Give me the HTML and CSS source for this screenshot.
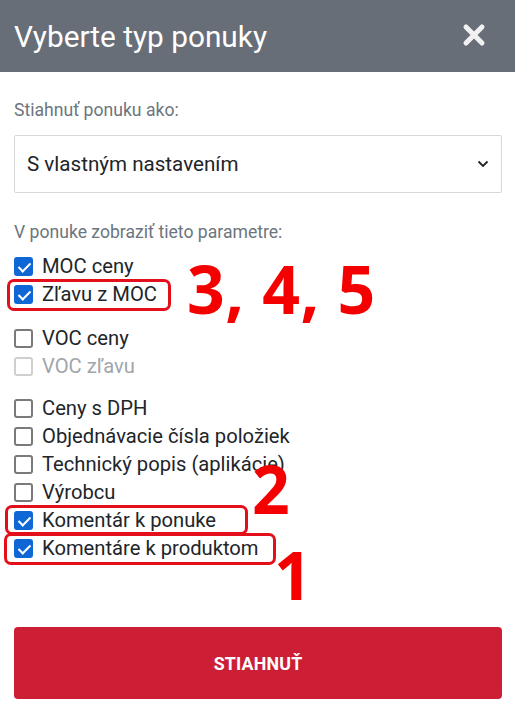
FILE: index.html
```html
<!DOCTYPE html>
<html lang="sk">
<head>
<meta charset="utf-8">
<title>Vyberte typ ponuky</title>
<link rel="stylesheet" href="styles.css">
</head>
<body>
<div class="dialog">
  <header class="dlg-head">
    <h1 class="dlg-title">Vyberte typ ponuky</h1>
    <svg class="dlg-close" width="24" height="24" viewBox="0 0 24 24"><path d="M4 4 L20 20 M20 4 L4 20" stroke="#f1f1f1" stroke-width="5" stroke-linecap="round"/></svg>
  </header>
  <div class="dlg-body">
    <div class="field-label">Stiahnuť ponuku ako:</div>
    <div class="select">
      <span>S vlastným nastavením</span>
      <svg width="12" height="8" viewBox="0 0 12 8"><path d="M1.5 1.5 L6 6 L10.5 1.5" fill="none" stroke="#222" stroke-width="1.8"/></svg>
    </div>
    <div class="field-label second">V ponuke zobraziť tieto parametre:</div>

    <div class="group">
      <div class="row"><span class="cb checked"></span><span class="lbl">MOC ceny</span></div>
      <div class="row"><span class="cb checked"></span><span class="lbl">Zľavu z MOC</span></div>
    </div>
    <div class="group">
      <div class="row"><span class="cb"></span><span class="lbl">VOC ceny</span></div>
      <div class="row disabled"><span class="cb"></span><span class="lbl">VOC zľavu</span></div>
    </div>
    <div class="group">
      <div class="row"><span class="cb"></span><span class="lbl">Ceny s DPH</span></div>
      <div class="row"><span class="cb"></span><span class="lbl">Objednávacie čísla položiek</span></div>
      <div class="row"><span class="cb"></span><span class="lbl">Technický popis (aplikácie)</span></div>
      <div class="row"><span class="cb"></span><span class="lbl">Výrobcu</span></div>
      <div class="row"><span class="cb checked"></span><span class="lbl">Komentár k ponuke</span></div>
      <div class="row"><span class="cb checked"></span><span class="lbl">Komentáre k produktom</span></div>
    </div>

    <button class="btn">STIAHNUŤ</button>
  </div>

  <div class="mark mark-a"></div>
  <div class="mark mark-b"></div>
  <div class="mark mark-c"></div>
  <div class="num num-345">3, 4, 5</div>
  <div class="num num-2">2</div>
  <div class="num num-1">1</div>
</div>
</body>
</html>
```
FILE: styles.css
```css
* { box-sizing: border-box; }
html, body { margin: 0; padding: 0; background: #fff; }
body { font-family: Roboto, "Liberation Sans", sans-serif; }

.dialog { position: relative; width: 515px; height: 713px; overflow: hidden; }

.dlg-head {
  height: 72px;
  background: #686e77;
  display: flex;
  align-items: center;
  justify-content: space-between;
  padding: 0 29px 0 14px;
}
.dlg-title {
  margin: 0;
  font-weight: 400;
  font-size: 29.8px;
  color: #fff;
}
.dlg-close { display: block; margin-top: -2px; }

.dlg-body { padding: 26px 13px 0 14px; }

.field-label {
  font-size: 17.6px;
  line-height: 24px;
  color: #6c757d;
}
.field-label.second { margin-top: 27px; }

.select {
  margin-top: 13px;
  height: 58px;
  border: 1px solid #d6d9dc;
  border-radius: 2px;
  display: flex;
  align-items: center;
  justify-content: space-between;
  padding: 0 12px 0 12px;
  font-size: 20.6px;
  color: #212529;
}

.group { display: flex; flex-direction: column; }
.field-label.second + .group { margin-top: 8px; }
.group + .group { margin-top: 16px; }
.group + .group + .group { margin-top: 14px; }

.row {
  height: 28px;
  display: flex;
  align-items: center;
  gap: 9px;
  font-size: 20.2px;
  color: #212529;
}
.cb {
  width: 19px;
  height: 19px;
  border: 2px solid #7a7a7a;
  border-radius: 3px;
  background: #fff;
  flex: none;
  position: relative;
}
.cb.checked {
  background: #0f67d6;
  border-color: #0f67d6;
}
.cb.checked::after {
  content: "";
  position: absolute;
  left: 4.5px;
  top: 1px;
  width: 5px;
  height: 10px;
  border: solid #fff;
  border-width: 0 2.5px 2.5px 0;
  transform: rotate(45deg);
}
.row.disabled { color: #a1a5aa; }
.row.disabled .cb { border-color: #cfcfcf; }

.btn {
  display: block;
  width: 488px;
  height: 72px;
  margin-top: 65px;
  border: 0;
  border-radius: 4px;
  background: #cc1e35;
  color: #fff;
  font-family: Roboto, "Liberation Sans", sans-serif;
  font-weight: 700;
  font-size: 17.8px;
  letter-spacing: 0.2px;
}

.mark {
  position: absolute;
  border: 3px solid #e3101c;
  border-radius: 7px;
}
.mark-a { left: 7px; top: 279px; width: 164px; height: 32px; }
.mark-b { left: 5px; top: 505px; width: 243px; height: 30px; }
.mark-c { left: 4px; top: 533px; width: 272px; height: 32px; }

.num {
  position: absolute;
  font-family: "Open Sans", "Liberation Sans", sans-serif;
  font-weight: 700;
  color: #f40000;
  line-height: 1;
}
.num-345 { left: 187px; top: 255px; font-size: 66px; letter-spacing: 0.5px; }
.num-2 { left: 252px; top: 455px; font-size: 66px; }
.num-1 { left: 274px; top: 541px; font-size: 66px; }
```
